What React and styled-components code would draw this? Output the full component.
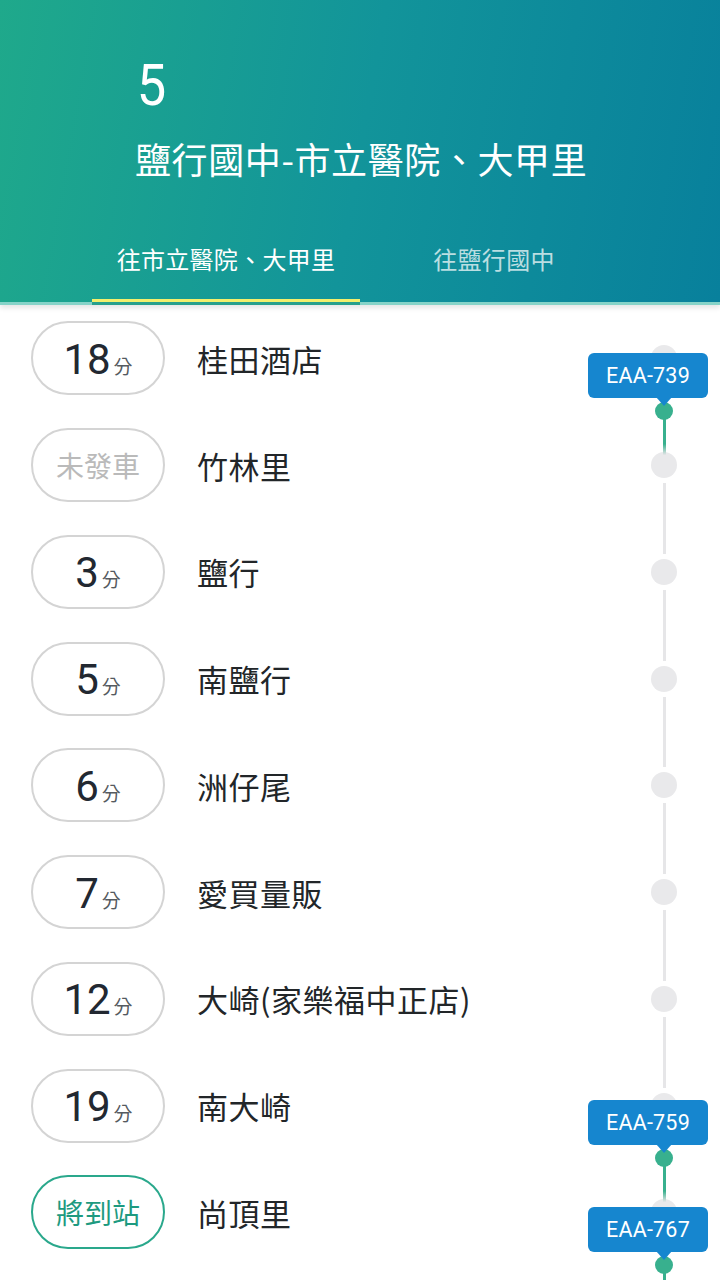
import React from 'react'
import styled, { createGlobalStyle } from 'styled-components'

const GlobalStyle = createGlobalStyle`
  html, body {
    margin: 0;
    padding: 0;
    background: #ffffff;
    overflow: hidden;
  }
  body {
    font-family: Roboto, "Noto Sans CJK TC", sans-serif;
  }
`

const Page = styled.div`
  width: 720px;
  height: 1280px;
  overflow: hidden;
  background: #ffffff;
  display: flex;
  flex-direction: column;
`

const Header = styled.header`
  height: 302px;
  flex-shrink: 0;
  display: flex;
  flex-direction: column;
  background: linear-gradient(100deg, #1fa98b 0%, #12949a 50%, #08809c 100%);
  border-bottom: 3px solid #86d3c8;
  box-shadow: 0 3px 5px rgba(0, 0, 0, 0.1);
  position: relative;
  z-index: 2;
`

const TitleBlock = styled.div`
  padding: 57px 0 0 135px;
  color: #ffffff;
`

const RouteNo = styled.div`
  font-family: Roboto, sans-serif;
  font-size: 57px;
  line-height: 1;
  padding-left: 2px;
  transform: scaleX(0.92);
  transform-origin: left center;
`

const RouteName = styled.div`
  margin-top: 26px;
  font-family: "Noto Sans CJK TC", sans-serif;
  font-size: 36px;
  letter-spacing: 0.6px;
  line-height: 1;
`

const TabBar = styled.nav`
  margin-top: auto;
  display: flex;
  padding: 0 92px;
`

const Tab = styled.div`
  width: 268px;
  height: 84px;
  display: flex;
  align-items: center;
  justify-content: center;
  font-family: "Noto Sans CJK TC", sans-serif;
  font-size: 24px;
  letter-spacing: 0.3px;
  color: ${p => (p.$active ? '#ffffff' : 'rgba(255,255,255,0.72)')};
  box-sizing: border-box;
  border-bottom: 3px solid ${p => (p.$active ? '#f3ef6c' : 'transparent')};
  box-shadow: ${p => (p.$active ? '0 3px 0 #28a08c' : 'none')};
`

const List = styled.main`
  display: flex;
  flex-direction: column;
`

const Row = styled.div`
  height: 106.75px;
  flex-shrink: 0;
  display: flex;
  align-items: center;
  padding-left: 31px;
  position: relative;
`

const Pill = styled.div`
  width: 134px;
  height: 74px;
  box-sizing: border-box;
  border-radius: 37px;
  border: 2px solid ${p => (p.$soon ? '#2aa88c' : '#d4d4d4')};
  display: flex;
  align-items: center;
  justify-content: center;
`

const MinuteGroup = styled.div`
  display: flex;
  align-items: baseline;
  padding-top: 3px;
`

const Minutes = styled.span`
  font-family: Roboto, sans-serif;
  font-size: 42px;
  line-height: 48px;
  color: #222831;
`

const Unit = styled.span`
  font-family: "Noto Sans CJK TC", sans-serif;
  font-size: 19px;
  color: #555a60;
  margin-left: 3px;
`

const Status = styled.span`
  font-family: "Noto Sans CJK TC", sans-serif;
  font-size: 28px;
  line-height: 1;
  color: ${p => (p.$soon ? '#1d9a80' : '#bababa')};
`

const Name = styled.div`
  margin-left: 32px;
  font-family: "Noto Sans CJK TC", sans-serif;
  font-size: 31px;
  color: #222629;
  letter-spacing: 0.5px;
`

const Track = styled.div`
  margin-left: auto;
  margin-right: 43px;
  width: 26px;
  align-self: stretch;
  display: flex;
  flex-direction: column;
  align-items: center;
`

const Segment = styled.div`
  flex: 1;
  width: 3px;
  background: ${p => (p.$hidden ? 'transparent' : '#e6e6e8')};
`

const Node = styled.div`
  width: 26px;
  height: 26px;
  border-radius: 50%;
  background: #e9e9eb;
  margin: 5px 0;
`

const Marker = styled.div`
  position: absolute;
  right: 12px;
  top: 48px;
  width: 120px;
  height: 100px;
  z-index: 1;
`

const Badge = styled.div`
  height: 45px;
  border-radius: 6px;
  background: #1686cf;
  color: #ffffff;
  display: flex;
  align-items: center;
  justify-content: center;
  font-family: Roboto, sans-serif;
  font-size: 21.5px;
  letter-spacing: 0.2px;
  position: relative;
  z-index: 2;
`

const Pointer = styled.div`
  position: absolute;
  left: 68px;
  top: 44px;
  width: 0;
  height: 0;
  border-left: 8px solid transparent;
  border-right: 8px solid transparent;
  border-top: 9px solid #1686cf;
  z-index: 3;
`

const Dot = styled.div`
  position: absolute;
  left: 67px;
  top: 49px;
  width: 18px;
  height: 18px;
  border-radius: 50%;
  background: #38b08e;
  z-index: 1;
`

const Tail = styled.div`
  position: absolute;
  left: 74.5px;
  top: 58px;
  width: 3px;
  height: 44px;
  background: linear-gradient(to bottom, #38b08e 0%, #38b08e 75%, #e6e6e8 100%);
`

const stops = [
  { min: '18', name: '桂田酒店', bus: 'EAA-739' },
  { status: '未發車', name: '竹林里' },
  { min: '3', name: '鹽行' },
  { min: '5', name: '南鹽行' },
  { min: '6', name: '洲仔尾' },
  { min: '7', name: '愛買量販' },
  { min: '12', name: '大崎(家樂福中正店)' },
  { min: '19', name: '南大崎', bus: 'EAA-759' },
  { status: '將到站', soon: true, name: '尚頂里', bus: 'EAA-767' },
]

function Stop({ stop, first }) {
  return (
    <Row>
      <Pill $soon={stop.soon}>
        {stop.min ? (
          <MinuteGroup>
            <Minutes>{stop.min}</Minutes>
            <Unit>分</Unit>
          </MinuteGroup>
        ) : (
          <Status $soon={stop.soon}>{stop.status}</Status>
        )}
      </Pill>
      <Name>{stop.name}</Name>
      <Track>
        <Segment $hidden={first} />
        <Node />
        <Segment />
      </Track>
      {stop.bus && (
        <Marker>
          <Badge>{stop.bus}</Badge>
          <Pointer />
          <Dot />
          <Tail />
        </Marker>
      )}
    </Row>
  )
}

export default function App() {
  return (
    <Page>
      <GlobalStyle />
      <Header>
        <TitleBlock>
          <RouteNo>5</RouteNo>
          <RouteName>鹽行國中-市立醫院、大甲里</RouteName>
        </TitleBlock>
        <TabBar>
          <Tab $active>往市立醫院、大甲里</Tab>
          <Tab>往鹽行國中</Tab>
        </TabBar>
      </Header>
      <List>
        {stops.map((s, i) => (
          <Stop key={s.name} stop={s} first={i === 0} />
        ))}
      </List>
    </Page>
  )
}
